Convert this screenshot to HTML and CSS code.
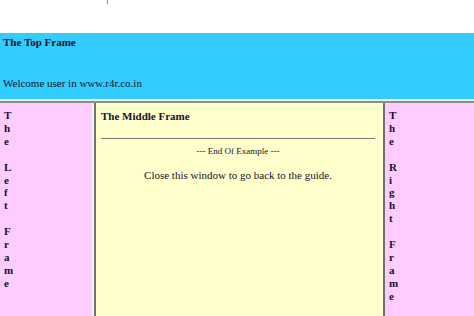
FILE: index.html
```html
<!DOCTYPE html>
<html lang="en">
<head>
  <meta charset="UTF-8">
  <title>Frames Example</title>
  <link rel="stylesheet" href="styles.css">
</head>
<body>
  <div class="page-top">
    <span class="cut-mark"></span>
  </div>

  <!-- Top Frame -->
  <div class="top-frame">
    <b>The Top Frame</b>
    <p class="welcome">Welcome user in www.r4r.co.in</p>
  </div>
  <div class="hsep"></div>

  <div class="frames-row">
    <!-- Left Frame -->
    <div class="side-frame left-frame">
      T<br>h<br>e<br><br>L<br>e<br>f<br>t<br><br>F<br>r<br>a<br>m<br>e
    </div>
    <div class="vsep vsep-left"></div>

    <!-- Middle Frame -->
    <div class="middle-frame">
      <b>The Middle Frame</b>
      <hr>
      <div class="end-note">--- End Of Example ---</div>
      <p class="close-note">Close this window to go back to the guide.</p>
    </div>
    <div class="vsep vsep-right"></div>

    <!-- Right Frame -->
    <div class="side-frame right-frame">
      T<br>h<br>e<br><br>R<br>i<br>g<br>h<br>t<br><br>F<br>r<br>a<br>m<br>e
    </div>
  </div>
</body>
</html>
```

FILE: styles.css
```css
body {
  margin: 0;
  font-family: "Liberation Serif", "Times New Roman", serif;
  font-size: 11px;
  color: #14142a;
  background-color: #ffffff;
  height: 316px;
  overflow: hidden;
}

.page-top {
  height: 33px;
  padding-left: 107px;
}

.cut-mark {
  display: block;
  width: 1px;
  height: 4px;
  background-color: #8a7fc0;
}

.top-frame {
  background-color: #33ccff;
  height: 60px;
  padding: 3px 3px;
  line-height: 13px;
}

.welcome {
  margin: 28px 0 0;
  font-size: 11px;
}

.hsep {
  height: 0;
  border-top: 2px solid #f2f2f2;
  border-bottom: 2px solid #8c8c8c;
}

.frames-row {
  display: flex;
  height: 213px;
}

.side-frame {
  background-color: #ffccff;
  font-weight: bold;
  line-height: 12.9px;
  padding: 6px 4px;
}

.left-frame {
  width: 84px;
}

.right-frame {
  flex: 1;
}

.vsep {
  width: 1px;
  background-color: #707070;
}

.vsep-left {
  border-left: 2px solid #f4f4f4;
  width: 2px;
}

.vsep-right {
  width: 2px;
}

.middle-frame {
  width: 274px;
  background-color: #ffffcc;
  padding: 7px 8px 0 5px;
  line-height: 13px;
}

.middle-frame hr {
  margin: 15px 0 6px;
  border: none;
  border-top: 1px solid #777;
}

.end-note {
  text-align: center;
  font-size: 9px;
}

.close-note {
  margin: 11px 0 0;
  text-align: center;
  font-size: 11px;
}
```
